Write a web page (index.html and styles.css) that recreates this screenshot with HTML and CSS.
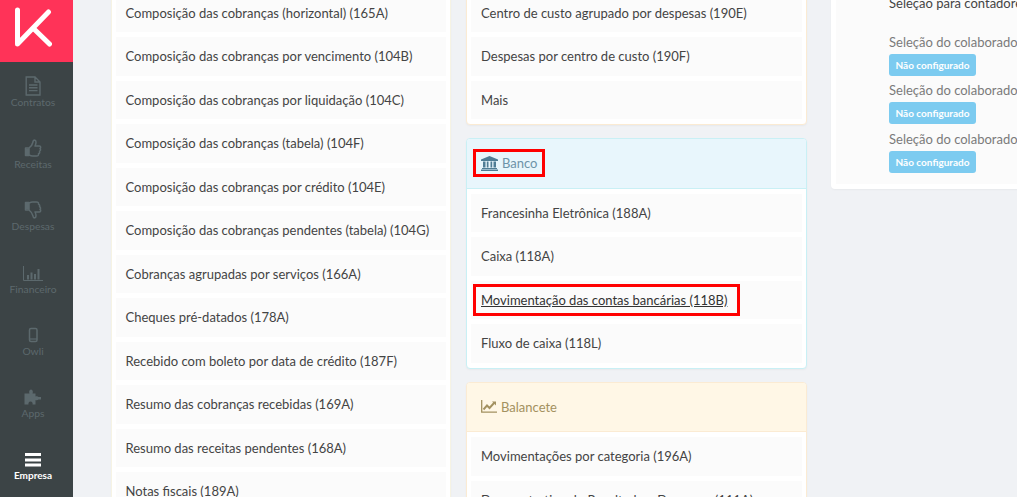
FILE: index.html
```html
<!DOCTYPE html>
<html lang="pt-BR">
<head>
<meta charset="utf-8">
<title>Relatórios</title>
<link rel="stylesheet" href="styles.css">
</head>
<body>
<aside class="sidebar">
  <div class="logo">
    <svg width="37" height="40" viewBox="0 0 37 40"><path d="M2.500 3V37L33.500 5M18 21L34.500 37" fill="none" stroke="#fff" stroke-width="5" stroke-linecap="round" stroke-linejoin="round"/></svg>
  </div>
  <nav class="nav">
    <a class="nav-item">
      <svg class="nav-icon" width="20" height="20" viewBox="0 0 20 20"><path d="M3.200 1H12L17 6V19H3.200ZM12 1V6H17M6 9H14.500M6 11.800H14.500M6 14.600H14.500" fill="none" stroke="currentColor" stroke-width="1.400"/></svg>
      <span>Contratos</span>
    </a>
    <a class="nav-item">
      <svg class="nav-icon" width="20" height="20" viewBox="0 0 20 20"><path d="M2.500 10H6V17.500H2.500ZM6 10C8 8.500 9.500 6.500 10 4C10.200 2.500 11 1.800 12 2.300C13.500 3 13.200 5.800 12 8H16.500C18 8 18 10 17 10.500C18 11.500 17.500 13 16.500 13.300C17 14.500 16.500 15.500 15.500 15.800C15.800 17.200 15 18 13.500 18H9.500C7.500 18 6.800 17.200 6 16.800" fill="none" stroke="currentColor" stroke-width="1.500" stroke-linejoin="round"/><rect x="3" y="10.500" width="3" height="6.500" fill="currentColor"/></svg>
      <span>Receitas</span>
    </a>
    <a class="nav-item">
      <svg class="nav-icon" width="20" height="20" viewBox="0 0 20 20"><path d="M2.500 2.500H6V10H2.500ZM6 10C8 11.500 9.500 13.500 10 16C10.200 17.500 11 18.200 12 17.700C13.500 17 13.200 14.200 12 12H16.500C18 12 18 10 17 9.500C18 8.500 17.500 7 16.500 6.700C17 5.500 16.500 4.500 15.500 4.200C15.800 2.800 15 2 13.500 2H9.500C7.500 2 6.800 2.800 6 3.200" fill="none" stroke="currentColor" stroke-width="1.500" stroke-linejoin="round"/><rect x="3" y="3" width="3" height="6.500" fill="currentColor"/></svg>
      <span>Despesas</span>
    </a>
    <a class="nav-item">
      <svg class="nav-icon" width="20" height="20" viewBox="0 0 20 20"><path d="M.5 3V17.500H20" fill="none" stroke="currentColor" stroke-width="1"/><path d="M4 12H6V16.500H4ZM7.500 9.500H9.500V16.500H7.500ZM11 11H13V16.500H11ZM14.500 6H16.500V16.500H14.500Z" fill="currentColor"/></svg>
      <span>Financeiro</span>
    </a>
    <a class="nav-item">
      <svg class="nav-icon" width="20" height="20" viewBox="0 0 20 20"><rect x="6.500" y="3.500" width="7.500" height="13" rx="1.500" fill="none" stroke="currentColor" stroke-width="1.500"/><path d="M6.500 14H14" stroke="currentColor" stroke-width="1.200"/></svg>
      <span>Owli</span>
    </a>
    <a class="nav-item">
      <svg class="nav-icon" width="20" height="20" viewBox="0 0 20 20"><path d="M1.500 6.500H6.500C5.700 5 6.200 2.500 8 2.500C9.800 2.500 10.300 5 9.500 6.500H12.500V9.500C14 9 15 9.500 15.500 10H18V12.500H15.500C15 13 14 13.500 12.500 13V17.500H9.500C10 16 9.200 14.500 7.500 14.500C5.800 14.500 5.200 16 5.500 17.500H1.500Z" fill="currentColor"/></svg>
      <span>Apps</span>
    </a>
    <a class="nav-item nav-item-active">
      <svg class="nav-icon" width="20" height="20" viewBox="0 0 20 20"><path d="M2 4H18V7H2ZM2 9.500H18V12.500H2ZM2 14.500H18V17.500H2Z" fill="currentColor"/></svg>
      <span>Empresa</span>
    </a>
  </nav>
</aside>
<main class="content">
  <section class="column">
    <div class="card card-plain">
      <ul class="rows">
        <li class="row">Composição das cobranças (horizontal) (165A)</li>
        <li class="row">Composição das cobranças por vencimento (104B)</li>
        <li class="row">Composição das cobranças por liquidação (104C)</li>
        <li class="row">Composição das cobranças (tabela) (104F)</li>
        <li class="row">Composição das cobranças por crédito (104E)</li>
        <li class="row">Composição das cobranças pendentes (tabela) (104G)</li>
        <li class="row">Cobranças agrupadas por serviços (166A)</li>
        <li class="row">Cheques pré-datados (178A)</li>
        <li class="row">Recebido com boleto por data de crédito (187F)</li>
        <li class="row">Resumo das cobranças recebidas (169A)</li>
        <li class="row">Resumo das receitas pendentes (168A)</li>
        <li class="row">Notas fiscais (189A)</li>
      </ul>
    </div>
  </section>
  <section class="column">
    <div class="card card-warm">
      <ul class="rows">
        <li class="row">Centro de custo agrupado por despesas (190E)</li>
        <li class="row">Despesas por centro de custo (190F)</li>
        <li class="row">Mais</li>
      </ul>
    </div>
    <div class="card card-info">
      <header class="card-head card-head-marked">
        <span class="mark mark-head">
          <svg class="head-icon head-icon-bank" width="17" height="15" viewBox="0 0 17 15"><path d="M8.500 0L17 3.500V5H0V3.500ZM2 5.500H4.500V11.500H2ZM5.800 5.500H7.500V11.500H5.800ZM9.500 5.500H11.200V11.500H9.500ZM12.500 5.500H15V11.500H12.500ZM1 12H16V13H1ZM0 13.500H17V15H0Z" fill="currentColor"/></svg>
          Banco
        </span>
      </header>
      <ul class="rows">
        <li class="row">Francesinha Eletrônica (188A)</li>
        <li class="row">Caixa (118A)</li>
        <li class="row row-marked"><a class="mark mark-link">Movimentação das contas bancárias (118B)</a></li>
        <li class="row">Fluxo de caixa (118L)</li>
      </ul>
    </div>
    <div class="card card-warm">
      <header class="card-head card-head-warm">
        <svg class="head-icon" width="16" height="13" viewBox="0 0 16 13"><path d="M.7 0V12.200H16" fill="none" stroke="currentColor" stroke-width="1.300"/><path d="M2.500 9.500L6 5.500L8.500 8L13.500 2.500" fill="none" stroke="currentColor" stroke-width="1.900"/><path d="M11 1.500H15V5.500Z" fill="currentColor"/></svg>
        Balancete
      </header>
      <ul class="rows">
        <li class="row">Movimentações por categoria (196A)</li>
        <li class="row">Demonstrativo do Resultado e Despesas (111A)</li>
      </ul>
    </div>
  </section>
  <section class="column column-side">
    <div class="card card-side">
      <div class="side-body">
        <p class="side-title">Seleção para contadores</p>
        <div class="side-item"><p class="side-label">Seleção do colaborador responsável</p><span class="badge">Não configurado</span></div>
        <div class="side-item"><p class="side-label">Seleção do colaborador financeiro</p><span class="badge">Não configurado</span></div>
        <div class="side-item"><p class="side-label">Seleção do colaborador comercial</p><span class="badge">Não configurado</span></div>
      </div>
    </div>
  </section>
</main>
</body>
</html>
```

FILE: styles.css
```css
* { box-sizing: border-box; }
html, body { height: 100%; }
body {
  margin: 0;
  display: flex;
  height: 497px;
  overflow: hidden;
  background: #f0f2f5;
  font-family: "Lato", sans-serif;
  font-size: 13px;
  color: #444;
}
p, ul { margin: 0; padding: 0; list-style: none; }

.sidebar { flex: 0 0 73px; background: #3c4446; height: 497px; }
.logo {
  height: 62px;
  background: #ff3358;
  padding: 7px 0 0 15px;
}
.nav { padding-right: 7px; }
.nav-item {
  height: 62.2px;
  display: flex;
  flex-direction: column;
  align-items: center;
  justify-content: center;
  padding-bottom: 2px;
  color: #5c696d;
  font-size: 10.3px;
  line-height: 12px;
}
.nav-icon { margin-bottom: 0; }
.nav-item-active { color: #fff; font-weight: 700; font-size: 10px; }

.content {
  flex: 1;
  min-width: 0;
  display: flex;
  align-items: flex-start;
  padding-left: 37.5px;
  margin-top: -12.5px;
  overflow: hidden;
  height: 510px;
}
.column { flex: 0 0 340.5px; min-width: 0; margin-right: 15px; display: flex; flex-direction: column; gap: 13px; }
.column-side { margin-left: 9.5px; margin-right: 0; }

.card {
  background: #fff;
  border: 1px solid #eef0f2;
  border-radius: 4px;
  box-shadow: 0 1px 2px rgba(0, 0, 0, .04);
}
.card-plain { border-color: #f6f3e4; }
.card-warm { border-color: #fbebd3; }
.card-info { border-color: #c9f0f5; }
.card-side { border: 0; padding: 5px; height: 201.5px; }

.card-head {
  height: 49.5px;
  display: flex;
  align-items: center;
  gap: 4px;
  padding-left: 14px;
  border-bottom: 1px solid #c9f0f5;
  background: #e8f6fc;
  color: #6d93a8;
  border-radius: 3px 3px 0 0;
}
.card-head-marked { padding-left: 6px; }
.card-head-warm { background: #fff7e6; border-bottom-color: #fbebd3; color: #a39160; }
.head-icon { flex: none; }
.head-icon-bank { color: #4f7d95; }

.rows { padding: 5px 4px; display: flex; flex-direction: column; gap: 5px; }
.row {
  height: 38.5px;
  display: flex;
  align-items: center;
  padding-left: 10px;
  background: #fbfbfb;
  white-space: nowrap;
  overflow: hidden;
}
.row-marked { padding-left: 2px; }
.mark { border: 3px solid #f00; display: inline-flex; align-items: center; padding: 0 5px; white-space: nowrap; }
.mark-head { height: 28px; gap: 4px; }
.mark-link { height: 32px; padding-right: 10px; color: #333; text-decoration: underline; }

.side-body { background: #fbfbfb; height: 191.5px; padding-left: 53px; white-space: nowrap; overflow: hidden; color: #7a7a7a; }
.side-title { color: #444; height: 17px; line-height: 17px; margin-top: 2px; margin-bottom: 22px; }
.side-item { height: 48.5px; }
.side-label { height: 16px; line-height: 17px; }
.badge {
  display: inline-block;
  margin-top: 4px;
  width: 87px;
  height: 22px;
  line-height: 22px;
  text-align: center;
  border-radius: 3px;
  background: #7ccbf0;
  color: #fff;
  font-size: 10px;
  font-weight: 700;
}
```
